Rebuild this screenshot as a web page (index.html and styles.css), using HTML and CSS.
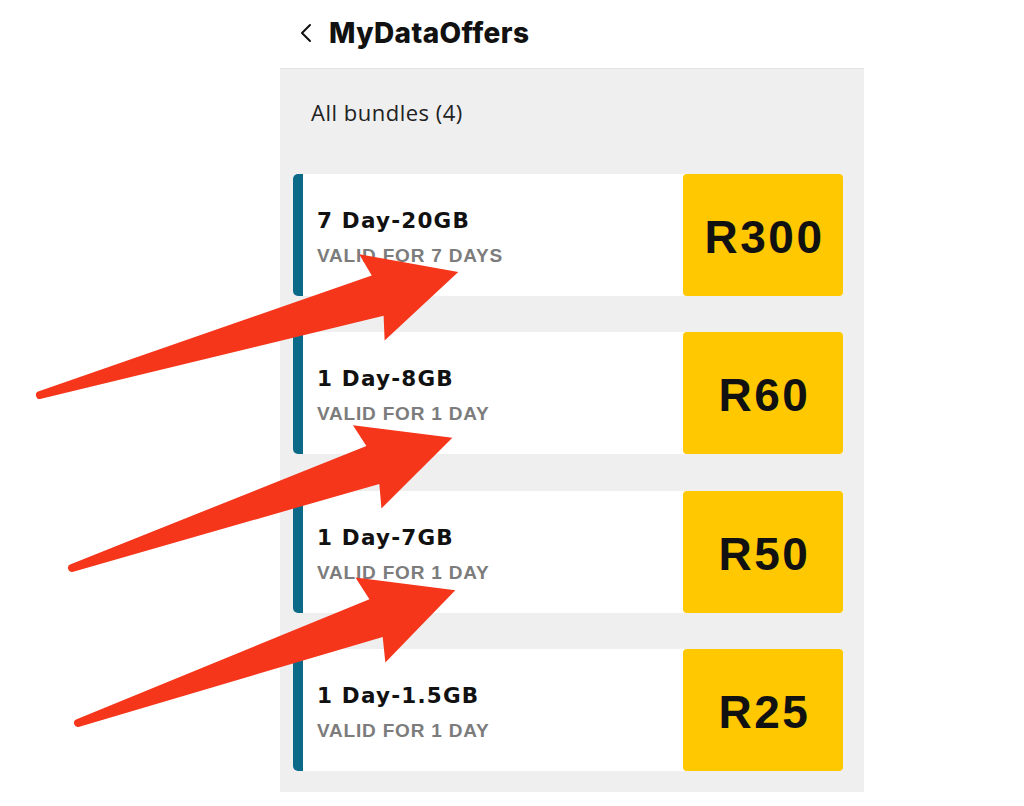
FILE: index.html
```html
<!DOCTYPE html>
<html lang="en">
<head>
<meta charset="utf-8">
<title>MyDataOffers</title>
<link rel="stylesheet" href="styles.css">
</head>
<body>
<div class="page">
  <div class="app">
    <header class="topbar">
      <svg class="back" width="14" height="20" viewBox="0 0 14 20" aria-hidden="true"><path d="M11 2 L3 10 L11 18" fill="none" stroke="#111" stroke-width="2" stroke-linecap="round" stroke-linejoin="round"/></svg>
      <h1 class="title">MyDataOffers</h1>
    </header>
    <main class="panel">
      <p class="count">All bundles (4)</p>
      <ul class="bundles">
        <li class="bundle">
          <div class="info">
            <div class="name">7 Day-20GB</div>
            <div class="valid">VALID FOR 7 DAYS</div>
          </div>
          <div class="price">R300</div>
        </li>
        <li class="bundle">
          <div class="info">
            <div class="name">1 Day-8GB</div>
            <div class="valid">VALID FOR 1 DAY</div>
          </div>
          <div class="price">R60</div>
        </li>
        <li class="bundle">
          <div class="info">
            <div class="name">1 Day-7GB</div>
            <div class="valid">VALID FOR 1 DAY</div>
          </div>
          <div class="price">R50</div>
        </li>
        <li class="bundle">
          <div class="info">
            <div class="name">1 Day-1.5GB</div>
            <div class="valid">VALID FOR 1 DAY</div>
          </div>
          <div class="price">R25</div>
        </li>
      </ul>
    </main>
  </div>
  <svg class="arrows" width="1024" height="806" viewBox="0 0 1024 806" aria-hidden="true">
    <g transform="translate(40 395) rotate(-16.4)">
      <path class="arrow" d="M0 -4 L352 -21 L346 -45 L436 0 L346 45 L352 21 L0 4 A4 4 0 0 1 0 -4 Z"/>
    </g>
    <g transform="translate(72 568) rotate(-18.9)">
      <path class="arrow" d="M0 -4 L318 -20 L312 -44 L402 0 L312 44 L318 20 L0 4 A4 4 0 0 1 0 -4 Z"/>
    </g>
    <g transform="translate(78 723) rotate(-19.4)">
      <path class="arrow" d="M0 -4 L316 -20 L310 -45 L400 0 L310 45 L316 20 L0 4 A4 4 0 0 1 0 -4 Z"/>
    </g>
  </svg>
</div>
</body>
</html>
```
FILE: styles.css
```css
* { box-sizing: border-box; }
html, body { margin: 0; padding: 0; background: #ffffff; }
body { font-family: Inter, "Liberation Sans", Arial, sans-serif; color: #111; }

.page {
  position: relative;
  width: 1024px;
  height: 806px;
  overflow: hidden;
}

.app {
  width: 584px;
  margin-left: 280px;
}

.topbar {
  height: 69px;
  display: flex;
  align-items: center;
  gap: 16px;
  padding-left: 19px;
  padding-bottom: 2px;
  border-bottom: 1px solid #e2e2e2;
}

.back { flex: none; }

.title {
  margin: 0;
  font-family: Inter, "Liberation Sans", sans-serif;
  font-weight: 800;
  font-size: 28px;
  letter-spacing: 0.4px;
  color: #111;
}

.panel {
  background: #efeff0;
  padding: 30px 21px 21px 13px;
}

.count {
  margin: 0 0 49px 18px;
  font-family: "Open Sans", "Liberation Sans", sans-serif;
  font-size: 22px;
  line-height: 26px;
  letter-spacing: 0.5px;
  color: #222;
}

.bundles {
  list-style: none;
  margin: 0;
  padding: 0;
  display: flex;
  flex-direction: column;
  gap: 36.33px;
}

.bundle {
  display: flex;
  height: 122px;
  background: #fff;
  border-left: 10px solid #0c6a89;
  border-radius: 5px 4px 4px 5px;
}

.info {
  flex: 1;
  padding: 34px 0 0 14px;
}

.name {
  font-family: "DejaVu Sans", Verdana, sans-serif;
  font-weight: 700;
  font-size: 21.5px;
  line-height: 26px;
  letter-spacing: 1.2px;
  color: #111;
}

.valid {
  margin-top: 11px;
  font-family: "Liberation Sans", Arial, sans-serif;
  font-weight: 700;
  font-size: 19px;
  line-height: 22px;
  letter-spacing: 0.8px;
  color: #7c7c7c;
}

.price {
  flex: none;
  width: 160px;
  display: flex;
  align-items: center;
  justify-content: center;
  padding-top: 4px;
  padding-left: 3px;
  background: #ffc800;
  border-radius: 4px;
  font-family: "Liberation Sans", Arial, sans-serif;
  font-weight: 700;
  font-size: 46px;
  letter-spacing: 2.5px;
  color: #111;
}

.arrows {
  position: absolute;
  left: 0;
  top: 0;
  pointer-events: none;
}

.arrow {
  fill: #f5361b;
}
```
